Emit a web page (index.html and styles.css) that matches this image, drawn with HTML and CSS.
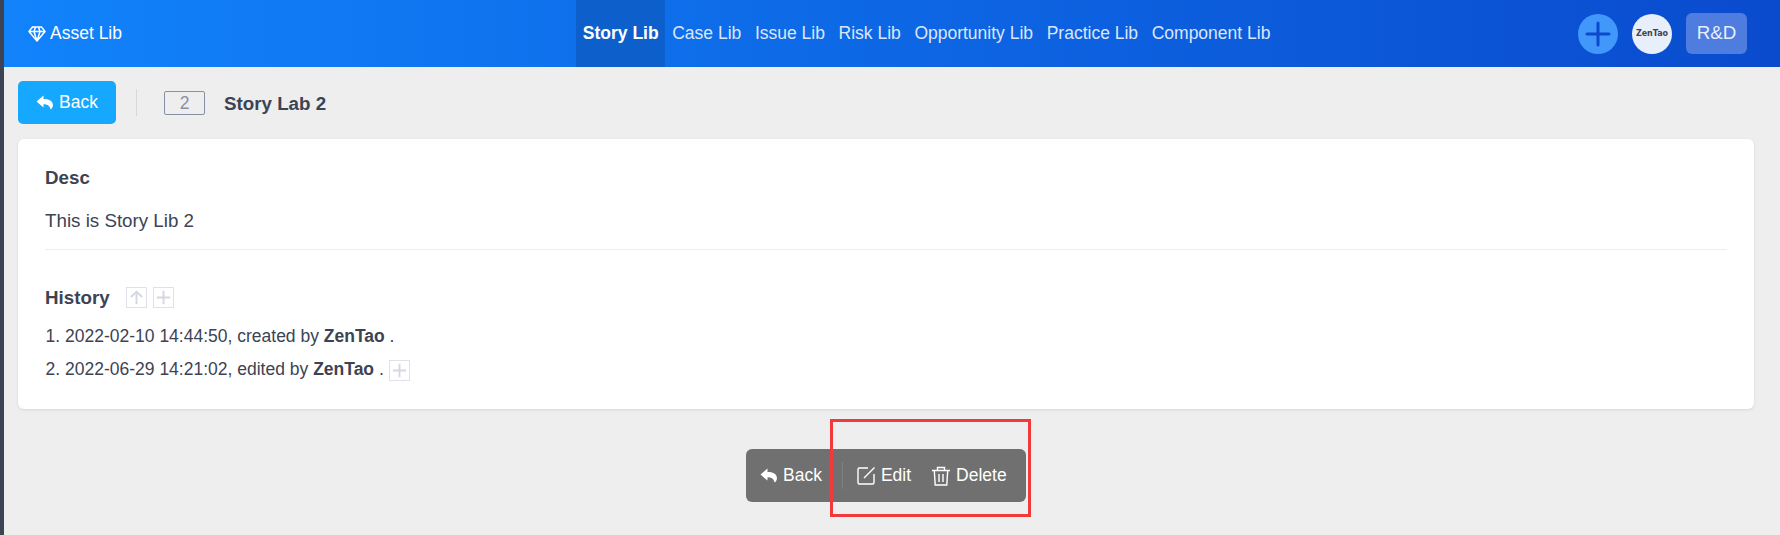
FILE: index.html
```html
<!DOCTYPE html>
<html lang="en">
<head>
  <meta charset="UTF-8" />
  <title>Story Lab 2 - Asset Lib</title>
  <link rel="stylesheet" href="styles.css">
</head>
<body>
  <div class="page">
    <header class="topbar">
      <div class="brand">
        <svg class="brand-icon" viewBox="0 0 18 16" width="18" height="16">
          <path d="M4.500 1h9L17 5.500 9 15 1 5.500zM1 5.500h16M6 5.500 9 15l3-9.500M6 5.500 7.500 1M12 5.500 10.500 1" fill="none" stroke="#fff" stroke-width="1.500" stroke-linejoin="round"/>
        </svg>
        <span>Asset Lib</span>
      </div>
      <nav class="nav">
        <a class="nav-item active">Story Lib</a>
        <a class="nav-item">Case Lib</a>
        <a class="nav-item">Issue Lib</a>
        <a class="nav-item">Risk Lib</a>
        <a class="nav-item">Opportunity Lib</a>
        <a class="nav-item">Practice Lib</a>
        <a class="nav-item">Component Lib</a>
      </nav>
      <div class="top-actions">
        <span class="add-btn">
          <svg viewBox="0 0 40 40" width="40" height="40"><path d="M9 20h22M20 9v22" stroke="#0a4bce" stroke-width="3" stroke-linecap="round"/></svg>
        </span>
        <span class="avatar">ZenTao</span>
        <span class="dept">R&amp;D</span>
      </div>
    </header>

    <main class="content">
      <div class="title-row">
        <a class="back-btn">
          <svg viewBox="0 0 18 16" width="18" height="16"><path d="M7.500 .5 .5 6.600l7 6V9.200c3.400 0 5.800.6 7.200 5.300 1.900-1.400 2.500-3.500 2.100-5.500-.7-3-4-4.900-9.300-4.900z" fill="#fff"/></svg>
          Back
        </a>
        <span class="divider"></span>
        <span class="id-badge">2</span>
        <span class="page-title">Story Lab 2</span>
      </div>

      <section class="card">
        <h2 class="section-title">Desc</h2>
        <p class="desc">This is Story Lib 2</p>
        <hr class="rule">
        <div class="history-head">
          <h2 class="section-title">History</h2>
          <span class="mini-btns">
            <span class="mini-btn">
              <svg viewBox="0 0 20 20" width="20" height="20"><path d="M10 17V4M4 9.500 10 4l6 5.500" fill="none" stroke="#d5d8e3" stroke-width="2"/></svg>
            </span>
            <span class="mini-btn">
              <svg viewBox="0 0 20 20" width="20" height="20"><path d="M3 10h14M10 3v14" fill="none" stroke="#d5d8e3" stroke-width="2"/></svg>
            </span>
          </span>
        </div>
        <ol class="history">
          <li>2022-02-10 14:44:50, created by <strong>ZenTao</strong> .</li>
          <li>2022-06-29 14:21:02, edited by <strong>ZenTao</strong> .
            <span class="mini-btn">
              <svg viewBox="0 0 20 20" width="20" height="20"><path d="M3 10h14M10 3v14" fill="none" stroke="#d5d8e3" stroke-width="2"/></svg>
            </span>
          </li>
        </ol>
      </section>

      <div class="toolbar-row">
        <div class="toolbar">
          <a class="tool">
            <svg viewBox="0 0 18 16" width="18" height="16"><path d="M7.500 .5 .5 6.600l7 6V9.200c3.400 0 5.800.6 7.200 5.300 1.900-1.400 2.500-3.500 2.100-5.500-.7-3-4-4.900-9.300-4.900z" fill="#fff"/></svg>
            Back
          </a>
          <span class="tool-sep"></span>
          <a class="tool">
            <svg viewBox="0 0 19 19" width="19" height="19"><path d="M11 2H2.500A1.500 1.500 0 0 0 1 3.500v13A1.500 1.500 0 0 0 2.500 18h13a1.500 1.500 0 0 0 1.500-1.500V8M7 12 17.500 1.500" fill="none" stroke="#fff" stroke-width="1.400"/></svg>
            Edit
          </a>
          <a class="tool tool-delete">
            <svg viewBox="0 0 20 20" width="20" height="20"><path d="M1 4.500h18M6.500 4.500V1.500h7v3M3.300 4.500l.9 14.500h11.600l.9-14.500M8 8v8M12 8v8" fill="none" stroke="#fff" stroke-width="1.400"/></svg>
            Delete
          </a>
        </div>
      </div>
    </main>

    <div class="highlight-box"></div>
  </div>
</body>
</html>
```
FILE: styles.css
```css
* {
  box-sizing: border-box;
}

html, body {
  margin: 0;
  height: 100%;
}

body {
  font-family: "Liberation Sans", Arial, sans-serif;
  color: #3c4353;
  background: #eee;
  overflow: hidden;
}

.page {
  position: relative;
  height: 535px;
  border-left: 4px solid #3c4353;
}

.topbar {
  height: 67px;
  display: flex;
  align-items: center;
  position: relative;
  padding: 0 33px 0 24px;
  background: linear-gradient(90deg, #1183fb 0%, #0a4bce 100%);
  color: #fff;
}

.brand {
  display: flex;
  align-items: center;
  gap: 4px;
  font-size: 17.5px;
}

.nav {
  display: flex;
  height: 67px;
  margin-left: 454px;
}

.nav-item {
  display: flex;
  align-items: center;
  padding: 0 6.800px;
  font-size: 17.5px;
  color: #dbe6fb;
}

.nav-item.active {
  background: #0d5fcb;
  color: #fff;
  font-weight: bold;
}

.top-actions {
  margin-left: auto;
  display: flex;
  align-items: center;
  gap: 14px;
}

.add-btn {
  width: 40px;
  height: 40px;
  border-radius: 50%;
  background: #4297fb;
}

.add-btn svg {
  display: block;
}

.avatar {
  width: 40px;
  height: 40px;
  border-radius: 50%;
  background: #e7effb;
  color: #3c4353;
  font-family: "DejaVu Sans", sans-serif;
  font-size: 8px;
  font-weight: bold;
  display: flex;
  align-items: center;
  justify-content: center;
}

.dept {
  width: 61px;
  height: 41px;
  padding-bottom: 2px;
  border-radius: 6px;
  background: #4f7cdf;
  color: #e7effb;
  font-size: 18.75px;
  display: flex;
  align-items: center;
  justify-content: center;
}

.content {
  padding: 14px 26px 0 14px;
}

.title-row {
  display: flex;
  align-items: center;
  height: 43px;
}

.back-btn {
  width: 98px;
  height: 43px;
  border-radius: 5px;
  background: #16a8fe;
  color: #fff;
  font-size: 17.5px;
  display: flex;
  align-items: center;
  justify-content: center;
  gap: 5px;
}

.divider {
  width: 1px;
  height: 27px;
  margin: 0 27px 0 20px;
  background: #d8d8d8;
}

.id-badge {
  width: 41px;
  height: 24px;
  border: 1px solid #8a90a3;
  border-radius: 2px;
  color: #8a90a3;
  font-size: 17.5px;
  text-align: center;
  line-height: 22px;
}

.page-title {
  margin-left: 19px;
  font-size: 18.75px;
  font-weight: bold;
  position: relative;
  top: 1px;
}

.card {
  margin-top: 15px;
  height: 270px;
  padding: 29px 27px 0;
  background: #fff;
  border-radius: 6px;
  box-shadow: 0 1px 3px rgba(0,0,0,0.1);
}

.section-title {
  margin: 0;
  font-size: 18.75px;
  line-height: 20px;
  font-weight: bold;
}

.desc {
  margin: 23px 0 0;
  font-size: 18.75px;
  line-height: 20px;
}

.rule {
  margin: 18px 0 0;
  border: 0;
  border-top: 1px solid #eee;
}

.history-head {
  display: flex;
  align-items: center;
  margin-top: 37px;
}

.mini-btns {
  display: flex;
  gap: 6px;
  margin-left: 16px;
}

.mini-btn {
  display: inline-block;
  width: 21px;
  height: 21px;
  border: 1px solid #dfe1ea;
  vertical-align: middle;
}

.mini-btn svg {
  display: block;
  width: 19px;
  height: 19px;
}

.history {
  margin: 12px 0 0;
  padding: 0 0 0 20px;
  font-size: 17.5px;
  line-height: 33px;
}

.toolbar-row {
  display: flex;
  justify-content: center;
  margin-top: 40px;
}

.toolbar {
  width: 280px;
  height: 53px;
  display: flex;
  align-items: center;
  padding-left: 14px;
  border-radius: 6px;
  background: #707070;
  color: #fff;
  font-size: 17.5px;
}

.tool {
  display: flex;
  align-items: center;
  gap: 5px;
}

.tool-sep {
  width: 1px;
  height: 27px;
  margin: 0 14px 0 20px;
  background: #808080;
}

.tool-delete {
  margin-left: 20px;
}

.highlight-box {
  position: absolute;
  left: 826px;
  top: 419px;
  width: 201px;
  height: 98px;
  border: 3px solid #f33a3a;
}
```
